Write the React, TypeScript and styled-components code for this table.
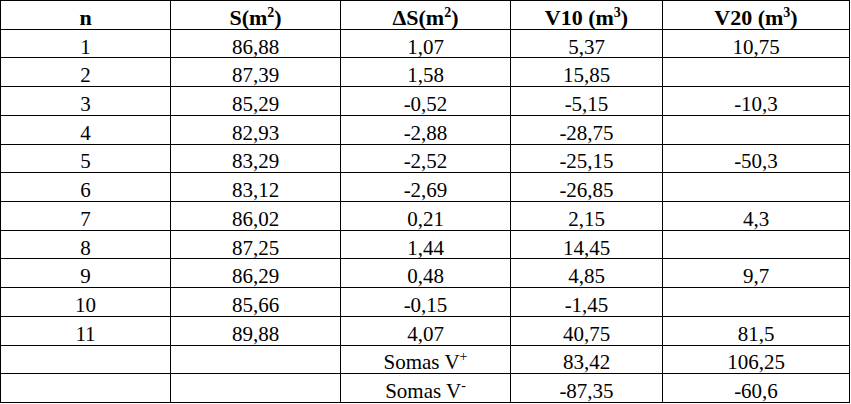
import * as React from 'react';
import styled, { createGlobalStyle } from 'styled-components';

interface Row {
    n: string;
    s: string;
    ds: string;
    v10: string;
    v20: string;
}

const rows: Row[] = [
    { n: '1', s: '86,88', ds: '1,07', v10: '5,37', v20: '10,75' },
    { n: '2', s: '87,39', ds: '1,58', v10: '15,85', v20: '' },
    { n: '3', s: '85,29', ds: '-0,52', v10: '-5,15', v20: '-10,3' },
    { n: '4', s: '82,93', ds: '-2,88', v10: '-28,75', v20: '' },
    { n: '5', s: '83,29', ds: '-2,52', v10: '-25,15', v20: '-50,3' },
    { n: '6', s: '83,12', ds: '-2,69', v10: '-26,85', v20: '' },
    { n: '7', s: '86,02', ds: '0,21', v10: '2,15', v20: '4,3' },
    { n: '8', s: '87,25', ds: '1,44', v10: '14,45', v20: '' },
    { n: '9', s: '86,29', ds: '0,48', v10: '4,85', v20: '9,7' },
    { n: '10', s: '85,66', ds: '-0,15', v10: '-1,45', v20: '' },
    { n: '11', s: '89,88', ds: '4,07', v10: '40,75', v20: '81,5' },
];

const sums = [
    { sign: '+', v10: '83,42', v20: '106,25' },
    { sign: '-', v10: '-87,35', v20: '-60,6' },
];

export default function App() {
    return <>
        <GlobalStyle />
        <Table>
            <colgroup>
                <Col w={170} />
                <Col w={170} />
                <Col w={170} />
                <Col w={152} />
                <Col w={187} />
            </colgroup>
            <thead>
                <Tr>
                    <HeadCell>n</HeadCell>
                    <HeadCell>S(m<Sup>2</Sup>)</HeadCell>
                    <HeadCell>ΔS(m<Sup>2</Sup>)</HeadCell>
                    <HeadCell>V10 (m<Sup>3</Sup>)</HeadCell>
                    <HeadCell>V20 (m<Sup>3</Sup>)</HeadCell>
                </Tr>
            </thead>
            <tbody>
                {rows.map(r => (
                    <Tr key={r.n}>
                        <Cell>{r.n}</Cell>
                        <Cell>{r.s}</Cell>
                        <Cell>{r.ds}</Cell>
                        <Cell>{r.v10}</Cell>
                        <Cell>{r.v20}</Cell>
                    </Tr>
                ))}
                {sums.map(s => (
                    <Tr key={s.sign}>
                        <Cell />
                        <Cell />
                        <Cell>Somas V<Sup>{s.sign}</Sup></Cell>
                        <Cell>{s.v10}</Cell>
                        <Cell>{s.v20}</Cell>
                    </Tr>
                ))}
            </tbody>
        </Table>
    </>
}

const GlobalStyle = createGlobalStyle`
body {
margin: 0;
background: #fff;
font-family: "Liberation Serif", "Times New Roman", serif;
color: #000;
}
`

const Table = styled.table`
border-collapse: collapse;
table-layout: fixed;
width: 850px;
font-size: 21px;

td, th {
border: 1px solid #000;
padding: 6px 0 0 0;
text-align: center;
vertical-align: middle;
line-height: 20px;
}
`

const Tr = styled.tr`
height: 28.72px;
`

const Col = styled.col<{ w: number }>`
width: ${p => p.w}px;
`

const HeadCell = styled.th`
font-weight: bold;
font-size: 22px;
`

const Cell = styled.td`
font-weight: normal;
`

const Sup = styled.sup`
font-size: 14px;
line-height: 0;
vertical-align: 8px;
`
